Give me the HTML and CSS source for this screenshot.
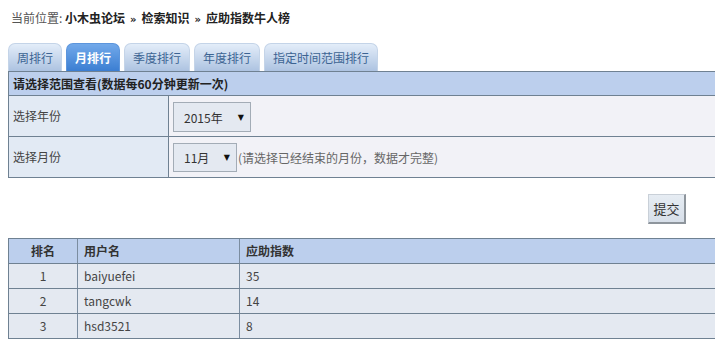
FILE: index.html
```html
<!DOCTYPE html>
<html lang="zh-CN">
<head>
<meta charset="utf-8">
<title>应助指数牛人榜</title>
<link rel="stylesheet" href="styles.css">
</head>
<body>
<div class="page">
  <div class="crumb">当前位置: <span class="trail"><a class="link">小木虫论坛</a><span class="sep">»</span><a class="link">检索知识</a><span class="sep">»</span><a class="link">应助指数牛人榜</a></span></div>
  <div class="tabs">
    <span class="tab">周排行</span>
    <span class="tab active">月排行</span>
    <span class="tab">季度排行</span>
    <span class="tab">年度排行</span>
    <span class="tab">指定时间范围排行</span>
  </div>
  <div class="box">
    <div class="box-head">请选择范围查看(数据每60分钟更新一次)</div>
    <div class="frow">
      <div class="flabel">选择年份</div>
      <div class="fval"><span class="sel sel-year"><span>2015年</span><span class="arr">▼</span></span></div>
    </div>
    <div class="frow">
      <div class="flabel">选择月份</div>
      <div class="fval"><span class="sel sel-month"><span>11月</span><span class="arr">▼</span></span><span class="hint">(请选择已经结束的月份，数据才完整)</span></div>
    </div>
  </div>
  <div class="btnrow"><span class="btn">提交</span></div>
  <div class="grid">
    <div class="grow ghead">
      <div class="c1">排名</div><div class="c2">用户名</div><div class="c3">应助指数</div>
    </div>
    <div class="grow">
      <div class="c1">1</div><div class="c2">baiyuefei</div><div class="c3">35</div>
    </div>
    <div class="grow">
      <div class="c1">2</div><div class="c2">tangcwk</div><div class="c3">14</div>
    </div>
    <div class="grow">
      <div class="c1">3</div><div class="c2">hsd3521</div><div class="c3">8</div>
    </div>
  </div>
</div>
</body>
</html>
```
FILE: styles.css
```css
html, body {
  margin: 0;
  padding: 0;
  overflow: hidden;
  background: #ffffff;
}
body {
  font-family: "Noto Sans CJK SC", "Noto Sans", sans-serif;
  font-size: 12px;
  color: #333333;
}
.page {
  width: 800px;
  padding: 10px 0 0 8px;
}
.crumb {
  height: 16px;
  line-height: 16px;
  padding-left: 3px;
  color: #555555;
}
.trail {
  font-weight: bold;
  color: #222222;
}
.link {
  color: #222222;
}
.sep {
  padding: 0 5px;
  font-family: "DejaVu Sans", sans-serif;
  font-size: 10px;
}
.tabs {
  display: flex;
  gap: 4px;
  margin-top: 17px;
  height: 28px;
  align-items: flex-end;
}
.tab {
  height: 27px;
  line-height: 28px;
  padding: 0 8px;
  border: 1px solid #c4d4e8;
  border-bottom: none;
  border-radius: 7px 7px 0 0;
  background: linear-gradient(#e3edf9, #adc3e1);
  color: #3c6493;
}
.tab.active {
  background: linear-gradient(#72a9ea, #3b7ed2);
  border-color: #5c95dc;
  color: #ffffff;
  font-weight: bold;
}
.box {
  border: 1px solid #6f8192;
  border-right: none;
}
.box-head {
  height: 23px;
  line-height: 23px;
  padding-left: 4px;
  background: #bccfed;
  border-bottom: 1px solid #6f8192;
  font-weight: bold;
  color: #222222;
}
.frow {
  display: flex;
  height: 40px;
  border-bottom: 1px solid #6f8192;
}
.frow:last-child {
  border-bottom: none;
}
.flabel {
  width: 155px;
  padding-left: 4px;
  line-height: 40px;
  background: #e2eaf4;
  border-right: 1px solid #6f8192;
  color: #444444;
}
.fval {
  flex: 1;
  display: flex;
  align-items: flex-start;
  padding: 6px 0 0 4px;
  background: #f2f2f7;
}
.sel {
  box-sizing: border-box;
  display: flex;
  align-items: center;
  justify-content: space-between;
  height: 30px;
  padding: 0 6px 0 10px;
  background: #e4e9f1;
  border: 1px solid #a3acb6;
  color: #333333;
}
.sel-year {
  width: 78px;
}
.sel-month {
  width: 64px;
  height: 29px;
}
.arr {
  font-size: 8px;
  color: #111111;
  font-family: "DejaVu Sans", sans-serif;
}
.hint {
  line-height: 29px;
  color: #666666;
  padding-left: 1px;
}
.btnrow {
  display: flex;
  padding: 16px 0 0 640px;
}
.btn {
  box-sizing: border-box;
  width: 38px;
  height: 30px;
  line-height: 27px;
  text-align: center;
  font-size: 13px;
  color: #333333;
  background: linear-gradient(#e6ecf3, #d7dfe9);
  border: 1px solid #c9d0d8;
  border-right: 2px solid #8e959c;
  border-bottom: 2px solid #8e959c;
}
.grid {
  margin-top: 14px;
  border-top: 1px solid #6f8192;
  border-left: 1px solid #6f8192;
}
.grow {
  display: flex;
  height: 24px;
  line-height: 24px;
  background: #e4e9f1;
  border-bottom: 1px solid #6f8192;
  color: #444444;
}
.ghead {
  background: #bccfed;
  font-weight: bold;
  color: #333333;
}
.c1 {
  width: 68px;
  text-align: center;
  border-right: 1px solid #7b8da0;
}
.c2 {
  width: 155px;
  padding-left: 6px;
  border-right: 1px solid #7b8da0;
}
.c3 {
  flex: 1;
  padding-left: 6px;
}
```
